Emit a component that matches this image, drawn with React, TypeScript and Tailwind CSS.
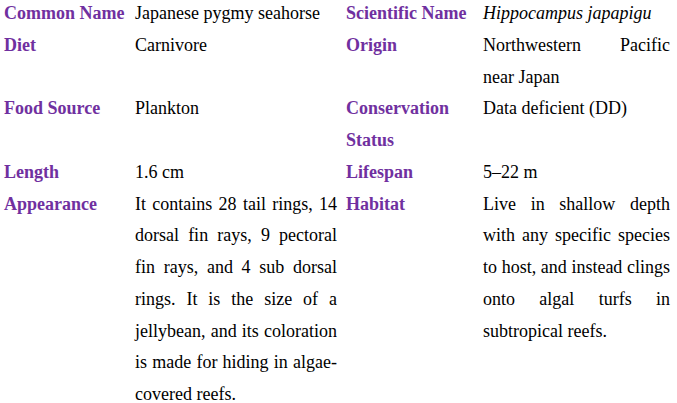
const ROWS: [string, string, string, React.ReactNode][] = [
  ['Common Name', 'Japanese pygmy seahorse', 'Scientific Name', <i>Hippocampus japapigu</i>],
  ['Diet', 'Carnivore', 'Origin', 'Northwestern Pacific near Japan'],
  ['Food Source', 'Plankton', 'Conservation Status', 'Data deficient (DD)'],
  ['Length', '1.6 cm', 'Lifespan', '5–22 m'],
  [
    'Appearance',
    'It contains 28 tail rings, 14 dorsal fin rays, 9 pectoral fin rays, and 4 sub dorsal rings. It is the size of a jellybean, and its coloration is made for hiding in algae-covered reefs.',
    'Habitat',
    'Live in shallow depth with any specific species to host, and instead clings onto algal turfs in subtropical reefs.',
  ],
];

export default function App() {
  return (
    <div className="w-[677px] h-[403px] overflow-hidden bg-white font-['Liberation_Serif','Times_New_Roman',serif]">
      <div className="-mt-[2px] pl-[4px] grid grid-cols-[131px_211px_137px_187px] text-[18px] leading-[31.75px] text-black">
        {ROWS.map(([l1, v1, l2, v2]) => (
          <div key={l1} className="contents">
            <div className="font-bold text-[#7030a0]">{l1}</div>
            <div className="pr-[9px] text-justify">{v1}</div>
            <div className="font-bold text-[#7030a0]">{l2}</div>
            <div className="text-justify">{v2}</div>
          </div>
        ))}
      </div>
    </div>
  );
}
